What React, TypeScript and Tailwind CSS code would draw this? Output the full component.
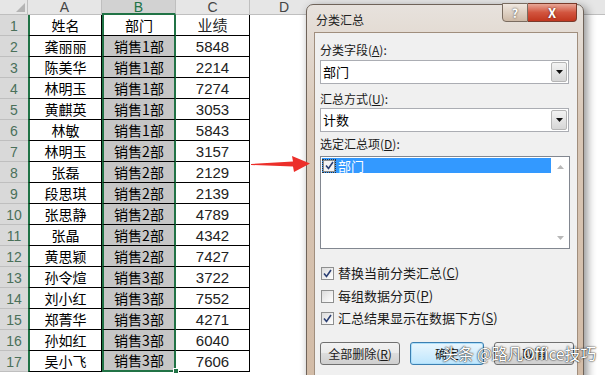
import React from "react";

const rows: [string, string, string][] = [
  ["龚丽丽", "销售1部", "5848"],
  ["陈美华", "销售1部", "2214"],
  ["林明玉", "销售1部", "7274"],
  ["黄麒英", "销售1部", "3053"],
  ["林敏", "销售1部", "5843"],
  ["林明玉", "销售2部", "3157"],
  ["张磊", "销售2部", "2129"],
  ["段思琪", "销售2部", "2139"],
  ["张思静", "销售2部", "4789"],
  ["张晶", "销售2部", "4342"],
  ["黄思颖", "销售2部", "7427"],
  ["孙令煊", "销售3部", "3722"],
  ["刘小红", "销售3部", "7552"],
  ["郑菁华", "销售3部", "4271"],
  ["孙如红", "销售3部", "6040"],
  ["吴小飞", "销售3部", "7606"],
];

const CheckMark = () => (
  <svg width="9" height="9" viewBox="0 0 9 9">
    <path d="M1 4.5 L3.5 7.5 L8 1" fill="none" stroke="#2b3f73" strokeWidth="1.6" />
  </svg>
);

const Checkbox = ({ checked }: { checked: boolean }) => (
  <div className="flex h-[13px] w-[13px] items-center justify-center border border-[#8e8f8f] bg-[linear-gradient(135deg,#dcdcdc,#ffffff)]">
    {checked && <CheckMark />}
  </div>
);

const Combo = ({ value }: { value: string }) => (
  <div className="flex h-[24px] w-[249px] items-center border border-[#abadb3] bg-white pl-[2px] pr-[1px]">
    <span className="flex-1 text-[13px] leading-[16px] text-black">{value}</span>
    <div className="flex h-[20px] w-[16px] items-center justify-center rounded-[2px] border border-[#b5b5b5] bg-[linear-gradient(180deg,#f3f3f3,#d6d6d6)]">
      <svg width="7" height="4" viewBox="0 0 7 4">
        <path d="M0 0 L7 0 L3.5 4 Z" fill="#111" />
      </svg>
    </div>
  </div>
);

const Btn = ({ label, focus }: { label: React.ReactNode; focus?: boolean }) => (
  <div
    className={
      focus
        ? "flex h-[23px] w-[74px] items-center justify-center rounded-[3px] border border-[#3c7fb1] bg-[linear-gradient(180deg,#eaf6fd,#bee6fd)] text-[12px] shadow-[inset_0_0_0_1px_#aee0fb]"
        : "flex h-[23px] w-[80px] items-center justify-center rounded-[3px] border border-[#707070] bg-[linear-gradient(180deg,#f2f2f2,#ebebeb_45%,#dddddd_50%,#cfcfcf)] text-[12px]"
    }
  >
    {label}
  </div>
);

const head = "flex h-[15px] items-center justify-center border-b border-r border-[#bfbfbf] bg-[#e6e6e6] font-['Liberation_Sans',sans-serif] text-[14px] leading-[14px] text-[#444]";

export default function App() {
  return (
    <div className="relative h-[375px] w-[605px] overflow-hidden bg-white font-['Noto_Sans_CJK_SC',sans-serif] text-black">
      {/* sheet */}
      <div className="grid grid-cols-[28px_74px_74px_74px_1fr]">
        <div className="relative h-[15px] border-b border-r border-[#bfbfbf] bg-[#e6e6e6]">
          <div className="absolute bottom-[2px] right-[2px] h-0 w-0 border-b-[9px] border-l-[9px] border-b-[#b4b4b4] border-l-transparent" />
        </div>
        <div className={head}>A</div>
        <div className="flex h-[15px] items-center justify-center border-b-2 border-r border-b-[#217346] border-r-[#bfbfbf] bg-[#d2d2d2] font-['Liberation_Sans',sans-serif] text-[14px] leading-[14px] text-[#217346]">B</div>
        <div className={head}>C</div>
        <div className="flex h-[15px] items-center border-b border-[#bfbfbf] bg-[#e6e6e6] pl-[29px] font-['Liberation_Sans',sans-serif] text-[14px] leading-[14px] text-[#444]">D</div>

        {[["姓名", "部门", "业绩"] as [string, string, string], ...rows].map((r, i) => (
          <React.Fragment key={i}>
            <div className="flex h-[21px] items-end justify-center border-b border-[#bfbfbf] bg-[#d9d9d9] pb-[1px] font-['Liberation_Sans',sans-serif] text-[14px] leading-[16px] text-[#4a7059]">
              {i + 1}
            </div>
            <div className="flex h-[21px] items-end justify-center border-b border-l-2 border-r border-b-black border-l-[#217346] border-r-black pb-[1px] text-[14px] leading-[17px]">
              {r[0]}
            </div>
            <div
              className={
                i === 0
                  ? "flex h-[21px] items-end justify-center border-x-2 border-b border-x-[#217346] border-b-black bg-white pb-[1px] text-[14px] leading-[17px]"
                  : i === 16
                    ? "relative flex h-[21px] items-end justify-center border-x-2 border-b-2 border-[#217346] bg-[#c6c6c6] pb-[1px] text-[14px] leading-[17px]"
                    : "flex h-[21px] items-end justify-center border-x-2 border-b border-x-[#217346] border-b-black bg-[#c6c6c6] pb-[1px] text-[14px] leading-[17px]"
              }
            >
              {r[1]}
              {i === 16 && (
                <div className="absolute bottom-[-4px] right-[-5px] h-[6px] w-[6px] border border-white bg-[#217346]" />
              )}
            </div>
            <div className="flex h-[21px] items-end justify-center border-b border-r border-black pb-[1px] font-['Liberation_Sans','Noto_Sans_CJK_SC',sans-serif] text-[15px] leading-[17px] text-[#222]">
              {r[2]}
            </div>
            <div className="h-[21px]" />
          </React.Fragment>
        ))}
      </div>

      {/* red arrow */}
      <svg className="absolute left-[250px] top-[152px] z-20" width="62" height="24" viewBox="0 0 62 24">
        <polygon points="1,12 43,9.5 42,4 60,11.5 44,20 43,14.5 1,13" fill="#ec2f2a" />
      </svg>

      {/* dialog */}
      <div className="absolute left-[306px] top-[4px] z-10 h-[390px] w-[278px] rounded-t-[7px] border border-[#6f6359] bg-[linear-gradient(180deg,#e7e2dd,#d9c7b6_30%,#d2bba6)] shadow-[3px_3px_10px_rgba(0,0,0,0.45)]">
        <div className="flex h-[27px] items-center pl-[9px] pt-[2px] text-[12px] text-[#222]">分类汇总</div>
        <div className="absolute right-[6px] top-[-2px] flex">
          <div className="flex h-[19px] w-[26px] items-center justify-center rounded-bl-[4px] border border-[#7a6c60] bg-[linear-gradient(180deg,#f0e8e0,#cdb9a6)] text-[12px] font-bold text-white [text-shadow:0_0_2px_#333]">
            ?
          </div>
          <div className="flex h-[19px] w-[49px] items-center justify-center rounded-br-[4px] border border-l-0 border-[#7a3a2a] bg-[linear-gradient(180deg,#e8a797,#d2553f_50%,#c1361e)] text-[13px] font-bold text-white [text-shadow:0_0_2px_#4a1208]">
            X
          </div>
        </div>

        <div className="ml-[7px] mr-[5px] flex h-[360px] flex-col border border-[#a08e7d] bg-[#f0f0f0] pl-[5px] pt-[9px] text-[12px] text-[#1a1a1a]">
          <div className="h-[16px] leading-[16px]">
            分类字段(<span className="underline">A</span>):
          </div>
          <div className="mt-[2px]">
            <Combo value="部门" />
          </div>
          <div className="mt-[7px] h-[16px] leading-[16px]">
            汇总方式(<span className="underline">U</span>):
          </div>
          <div className="mt-[1px]">
            <Combo value="计数" />
          </div>
          <div className="mt-[4px] h-[16px] leading-[16px]">
            选定汇总项(<span className="underline">D</span>):
          </div>
          <div className="mt-[4px] flex h-[93px] w-[250px] border border-[#828790] bg-white">
            <div className="flex-1 pl-[1px] pt-[1px]">
              <div className="flex h-[15px] w-[229px] items-center gap-[2px] bg-[#3399ff] text-[13px] text-white">
                <div className="border border-dotted border-[#333]">
                  <div className="flex h-[12px] w-[12px] items-center justify-center border border-[#8e8f8f] bg-[#f4f4f4]">
                    <CheckMark />
                  </div>
                </div>
                <span className="leading-[15px]">部门</span>
              </div>
            </div>
            <div className="flex w-[17px] flex-col items-center justify-between py-[8px]">
              <svg width="7" height="4" viewBox="0 0 7 4">
                <path d="M0 4 L7 4 L3.5 0 Z" fill="#b8b8b8" />
              </svg>
              <svg width="7" height="4" viewBox="0 0 7 4">
                <path d="M0 0 L7 0 L3.5 4 Z" fill="#b8b8b8" />
              </svg>
            </div>
          </div>

          <div className="mt-[16px] flex h-[16px] items-center gap-[4px] pl-[1px]">
            <Checkbox checked />
            <span className="text-[13px]">
              替换当前分类汇总(<span className="underline">C</span>)
            </span>
          </div>
          <div className="mt-[7px] flex h-[16px] items-center gap-[4px] pl-[1px]">
            <Checkbox checked={false} />
            <span className="text-[13px]">
              每组数据分页(<span className="underline">P</span>)
            </span>
          </div>
          <div className="mt-[6px] flex h-[16px] items-center gap-[4px] pl-[1px]">
            <Checkbox checked />
            <span className="text-[13px]">
              汇总结果显示在数据下方(<span className="underline">S</span>)
            </span>
          </div>

          <div className="mt-[16px] flex items-center">
            <Btn label={<>全部删除(<span className="underline">R</span>)</>} />
            <div className="ml-[10px]">
              <Btn label="确定" focus />
            </div>
            <div className="ml-[10px]">
              <Btn label="取消" />
            </div>
          </div>
        </div>
      </div>

      {/* watermark */}
      <div className="absolute left-[442px] top-[343px] z-30 text-[16px] leading-[20px] tracking-[-0.3px] text-white [text-shadow:0_0_2px_rgba(0,0,0,0.75),0_0_1px_rgba(0,0,0,0.9)]">
        头条 @路凡Office技巧
      </div>
    </div>
  );
}
